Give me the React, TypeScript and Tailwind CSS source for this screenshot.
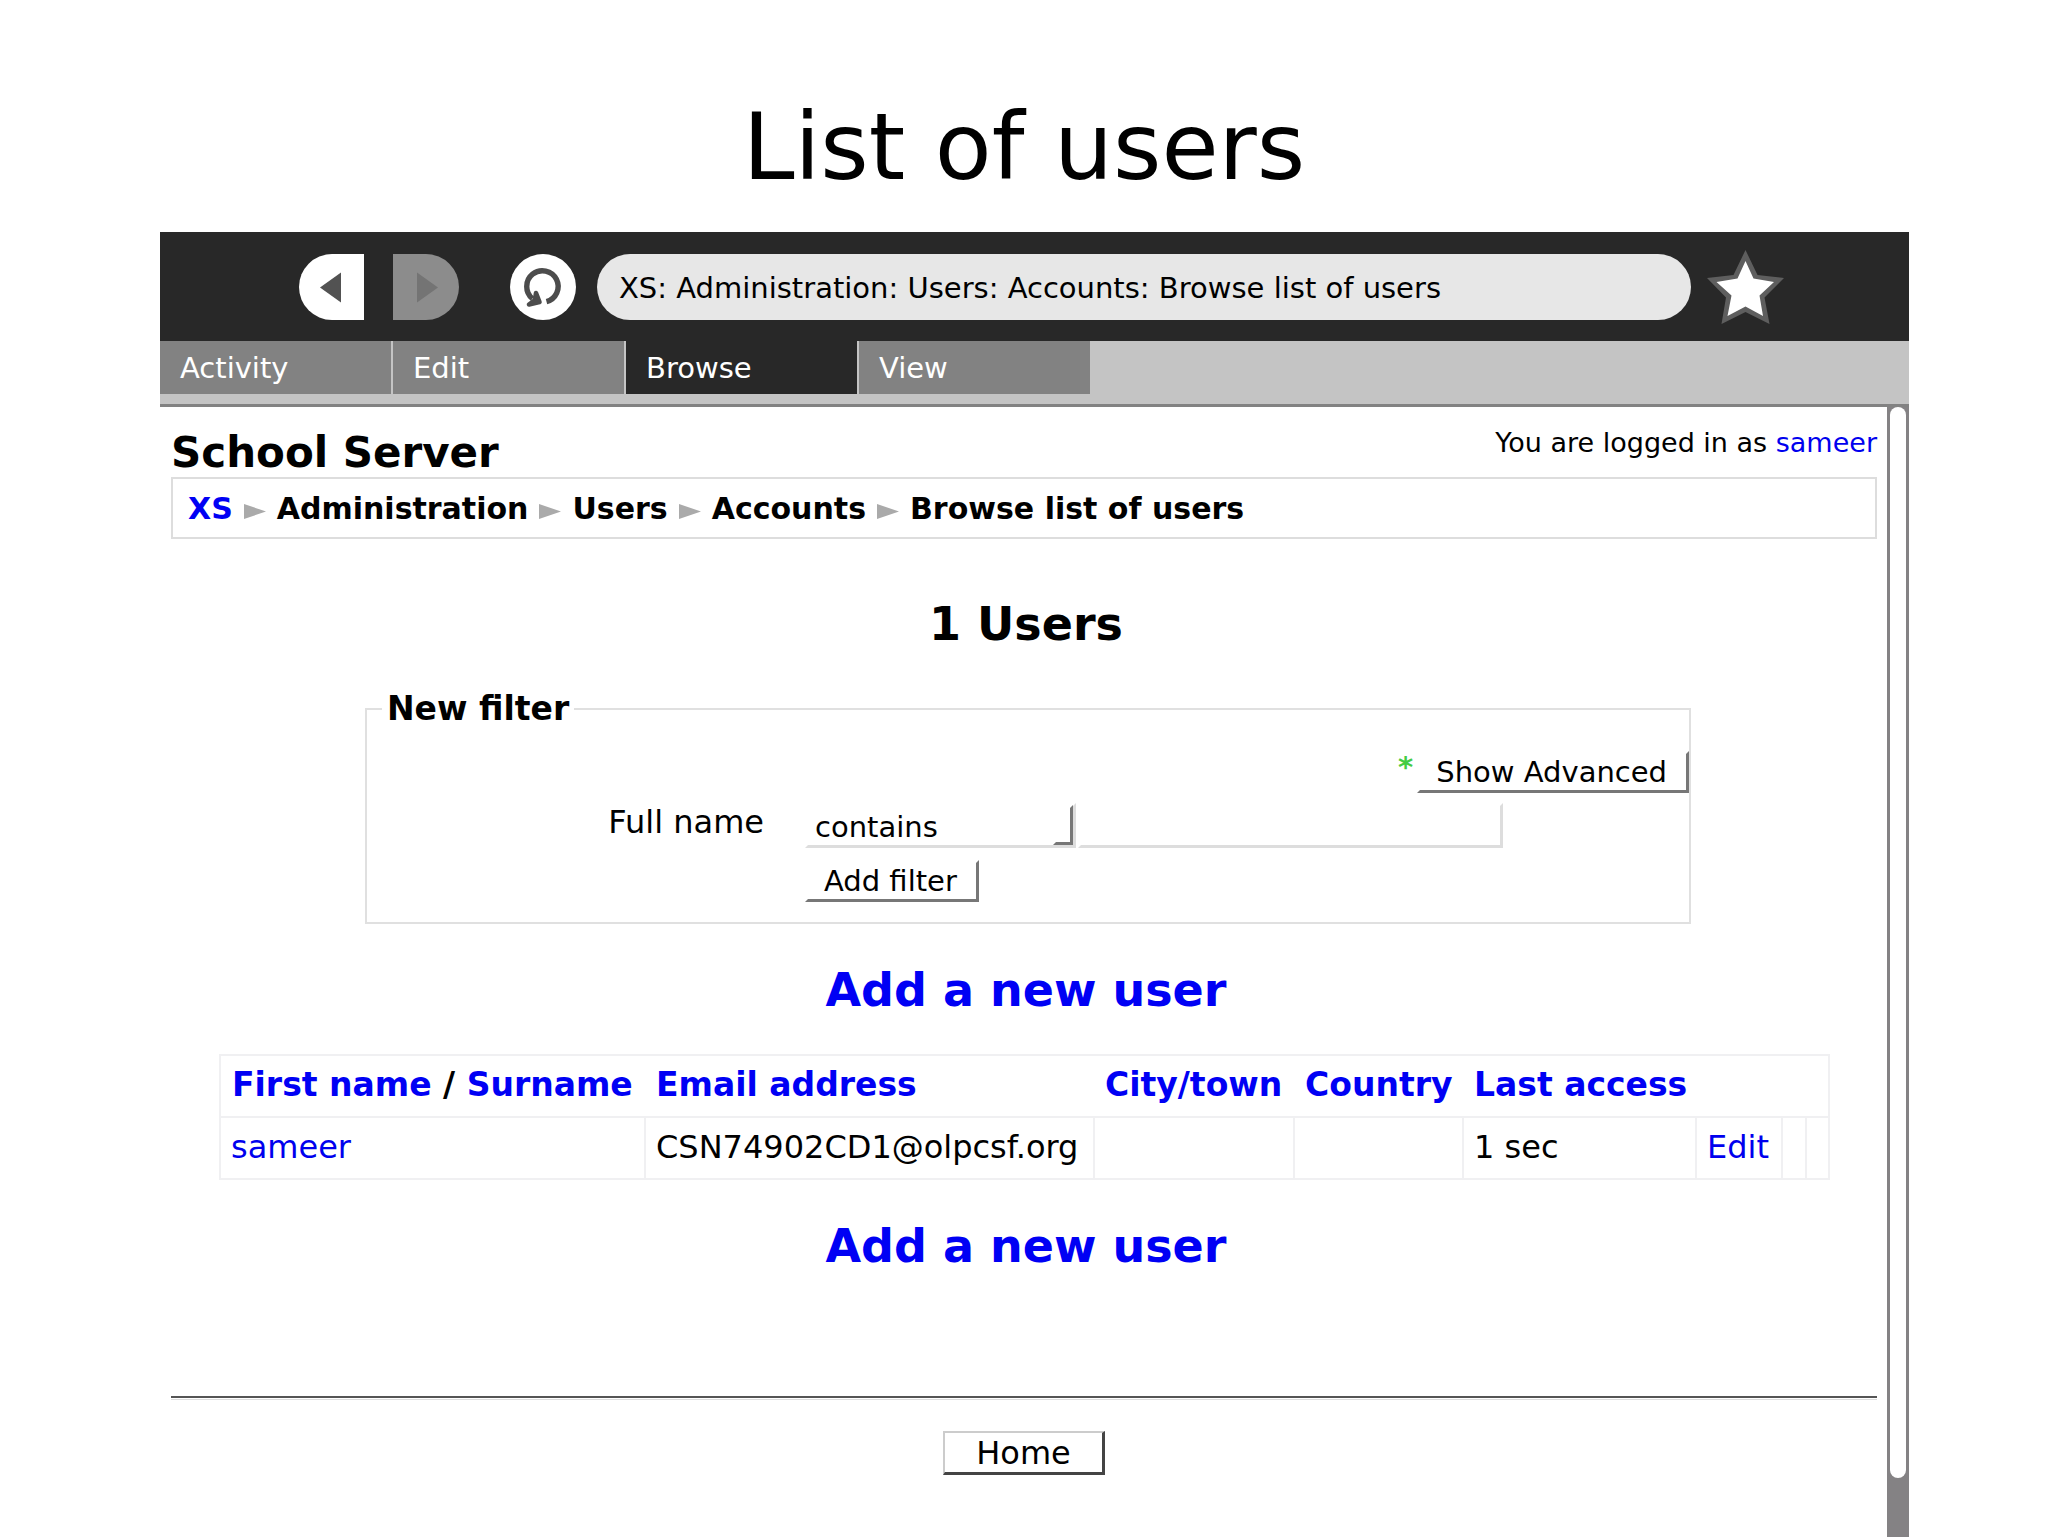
import { useState } from 'react';
import clsx from 'clsx';

const tabs = ['Activity', 'Edit', 'Browse', 'View'];

const crumbs = [
  { label: 'XS', href: '#home' },
  { label: 'Administration' },
  { label: 'Users' },
  { label: 'Accounts' },
  { label: 'Browse list of users' },
];

const users = [
  { name: 'sameer', email: 'CSN74902CD1@olpcsf.org', city: '', country: '', lastAccess: '1 sec' },
];

const BackIcon = () => (
  <svg viewBox="0 0 65 66" className="w-full h-full" aria-hidden="true">
    <path d="M42 18.5V48.5L21 33.5Z" fill="#525252" />
  </svg>
);

const ForwardIcon = () => (
  <svg viewBox="0 0 65 66" className="w-full h-full" aria-hidden="true">
    <path d="M23.5 18.5V48.5L44.5 33.5Z" fill="#747474" />
  </svg>
);

const ReloadIcon = () => (
  <svg viewBox="0 0 66 66" className="w-full h-full" aria-hidden="true">
    <path d="M36.5 47.6A15.7 15.7 0 1 0 22.5 44.6" fill="none" stroke="#4c4c4c" strokeWidth="5.4" />
    <path
      d="M26 39L29.5 48L19 50.5L25 46Z"
      fill="#4c4c4c"
      stroke="#4c4c4c"
      strokeWidth="4.6"
      strokeLinejoin="round"
    />
  </svg>
);

const StarIcon = () => (
  <svg viewBox="0 0 77 74" className="w-full h-full" aria-hidden="true">
    <path
      d="M38.5 0L50.5 25L77 28L57.5 47.5L62.5 74L38.5 62L14.5 74L19 47.5L0 28L26.5 25Z"
      fill="#5e5e5e"
    />
    <path
      d="M38.5 11L46.5 28.5L67 32L52.5 45.5L56 66L38.5 56.5L20.5 66L24.5 45.5L9.5 32L30.5 28.5Z"
      fill="#fff"
    />
  </svg>
);

const CrumbArrow = () => (
  <svg viewBox="0 0 22 15" className="w-[22px] h-[15px] mt-1" aria-hidden="true">
    <path d="M0 0L22 7.5L0 15Z" fill="#aaa" />
  </svg>
);

const BevelButton = ({ children }: { children: string }) => (
  <button
    type="button"
    className="h-[42px] pl-4 pr-[19px] text-[29px] leading-9 whitespace-nowrap border-[3px] border-white border-r-[#777] border-b-[#777]"
  >
    {children}
  </button>
);

const AddUserLink = () => (
  <h2 className="pl-1 text-center text-[46px] leading-[56px] font-bold">
    <a href="#add" className="text-[#0000f4]">Add a new user</a>
  </h2>
);

export default function App() {
  const [activeTab, setActiveTab] = useState('Browse');
  const [address, setAddress] = useState('XS: Administration: Users: Accounts: Browse list of users');
  const [fullName, setFullName] = useState('');

  return (
    <div className="min-h-screen flex flex-col bg-white text-black font-['DejaVu_Sans',sans-serif]">
      <h1 className="pt-[92px] pb-[30px] text-center text-[93px] leading-[110px]">List of users</h1>

      <div className="flex-1 flex flex-col ml-[160px] mr-[139px]">
        <div className="h-[109px] flex items-center bg-[#282828] pl-[139px] pr-[125px]">
          <button type="button" aria-label="Back" className="w-[65px] h-[66px] shrink-0 bg-white rounded-l-full">
            <BackIcon />
          </button>
          <button
            type="button"
            aria-label="Forward"
            disabled
            className="w-[66px] h-[66px] ml-[29px] shrink-0 bg-[#8c8c8c] rounded-r-full"
          >
            <ForwardIcon />
          </button>
          <button type="button" aria-label="Reload" className="w-[66px] h-[66px] ml-[51px] shrink-0 bg-white rounded-full">
            <ReloadIcon />
          </button>
          <input
            type="text"
            aria-label="Address"
            value={address}
            onChange={(e) => setAddress(e.target.value)}
            className="flex-1 min-w-0 h-[66px] ml-[21px] px-[22px] pt-[2px] rounded-full bg-[#e7e7e7] text-[29px]"
          />
          <button type="button" aria-label="Bookmark" className="w-[77px] h-[74px] ml-4 shrink-0">
            <StarIcon />
          </button>
        </div>

        <div className="flex gap-[2px] bg-[#c4c4c4] pb-[10px] border-b-[3px] border-[#828282]">
          {tabs.map((tab) => (
            <button
              key={tab}
              type="button"
              onClick={() => setActiveTab(tab)}
              className={clsx(
                'w-[231px] h-[53px] pl-5 pt-[2px] text-left text-[29px] text-white',
                tab === activeTab ? 'bg-[#282828]' : 'bg-[#828282]'
              )}
            >
              {tab}
            </button>
          ))}
        </div>

        <div className="flex-1 flex">
          <main className="flex-1 min-w-0 pt-[22px] pl-[11px] pr-[10px]">
            <header className="flex justify-between items-start">
              <p className="text-[42px] leading-[48px] font-bold">School Server</p>
              <p className="text-[27px] leading-7">
                You are logged in as <a href="#profile" className="text-[#0000ee]">sameer</a>
              </p>
            </header>

            <nav aria-label="Breadcrumb" className="h-[62px] flex items-center border-2 border-[#ddd] pt-[2px] pl-[15px]">
              <ol className="flex items-center gap-[11px] text-[30px] leading-9 font-bold">
                {crumbs.map((crumb, i) => (
                  <li key={crumb.label} className="flex items-center gap-[11px]">
                    {i > 0 && <CrumbArrow />}
                    {crumb.href ? (
                      <a href={crumb.href} className="text-[#0000f4]">{crumb.label}</a>
                    ) : (
                      <span>{crumb.label}</span>
                    )}
                  </li>
                ))}
              </ol>
            </nav>

            <h2 className="mt-[57px] pl-1 text-center text-[46px] leading-[56px] font-bold">1 Users</h2>

            <fieldset className="mt-[39px] ml-[194px] mr-[186px] border-2 border-[#e0e0e0] pb-5">
              <legend className="ml-[15px] px-[5px] text-[33px] leading-9 font-bold">New filter</legend>

              <div className="mt-6 flex justify-end">
                <span className="mr-1 text-[29px] leading-8 font-bold text-[#4c4]">*</span>
                <BevelButton>Show Advanced</BevelButton>
              </div>

              <div className="mt-[10px] grid grid-cols-[397px_1fr] gap-x-[41px] gap-y-3">
                <label htmlFor="fullname" className="text-right text-[32px] leading-[38px]">
                  Full name
                </label>
                <div className="flex gap-[2px]">
                  <div className="relative">
                    <select
                      aria-label="Full name match"
                      className="appearance-none w-[271px] h-[45px] pl-[7px] bg-white text-[29px] border-[3px] border-white border-r-[#ddd] border-b-[#ddd]"
                    >
                      <option>contains</option>
                      <option>doesn't contain</option>
                      <option>is equal to</option>
                      <option>starts with</option>
                      <option>ends with</option>
                      <option>is empty</option>
                    </select>
                    <span className="pointer-events-none absolute right-[3px] bottom-[3px] w-[20px] h-[40px] border-[3px] border-transparent border-r-[#777] border-b-[#777]" />
                  </div>
                  <input
                    id="fullname"
                    type="text"
                    value={fullName}
                    onChange={(e) => setFullName(e.target.value)}
                    className="w-[425px] h-[45px] px-2 text-[29px] border-[3px] border-white border-r-[#ddd] border-b-[#ddd]"
                  />
                </div>
                <div className="col-start-2">
                  <BevelButton>Add filter</BevelButton>
                </div>
              </div>
            </fieldset>

            <div className="mt-[38px]">
              <AddUserLink />
            </div>

            <div className="mt-9 mx-[48px]">
              <table className="w-full table-fixed border-collapse border-2 border-[#f0f0f2] text-left text-[32px] leading-[38px] whitespace-nowrap">
                <colgroup>
                  <col className="w-[425px]" />
                  <col className="w-[449px]" />
                  <col className="w-[200px]" />
                  <col className="w-[169px]" />
                  <col className="w-[233px]" />
                  <col className="w-[86px]" />
                  <col className="w-[24px]" />
                  <col className="w-[23px]" />
                </colgroup>
                <thead>
                  <tr className="h-[62px] text-[33px] text-[#0000f4]">
                    <th className="pl-[11px] pb-[2px]">
                      <a href="#firstname">First name</a> <span className="text-black">/</span>{' '}
                      <a href="#lastname">Surname</a>
                    </th>
                    <th className="pl-[11px] pb-[2px]"><a href="#email">Email address</a></th>
                    <th className="pl-[11px] pb-[2px]"><a href="#city">City/town</a></th>
                    <th className="pl-[11px] pb-[2px]"><a href="#country">Country</a></th>
                    <th className="pl-[11px] pb-[2px]"><a href="#lastaccess">Last access</a></th>
                    <th colSpan={3} />
                  </tr>
                </thead>
                <tbody>
                  {users.map((user) => (
                    <tr key={user.name} className="h-[62px]">
                      <td className="pl-[10px] pb-[2px] border-2 border-[#f0f0f2]">
                        <a href="#user" className="text-[#0000ee]">{user.name}</a>
                      </td>
                      <td className="pl-[10px] pb-[2px] border-2 border-[#f0f0f2]">{user.email}</td>
                      <td className="pl-[10px] pb-[2px] border-2 border-[#f0f0f2]">{user.city}</td>
                      <td className="pl-[10px] pb-[2px] border-2 border-[#f0f0f2]">{user.country}</td>
                      <td className="pl-[10px] pb-[2px] border-2 border-[#f0f0f2]">{user.lastAccess}</td>
                      <td className="pl-[10px] pb-[2px] border-2 border-[#f0f0f2]">
                        <a href="#edit" className="text-[#0000ee]">Edit</a>
                      </td>
                      <td className="border-2 border-[#f0f0f2]" />
                      <td className="border-2 border-[#f0f0f2]" />
                    </tr>
                  ))}
                </tbody>
              </table>
            </div>

            <div className="mt-[38px]">
              <AddUserLink />
            </div>

            <hr className="mt-[122px] h-1 border-t-2 border-b border-t-[#555] border-b-[#ddd]" />

            <div className="mt-[31px] flex justify-center">
              <button
                type="button"
                className="h-11 px-[31px] text-[32px] leading-[38px] border-2 border-[#ccc] border-r-[3px] border-b-[3px] border-r-[#444] border-b-[#444]"
              >
                Home
              </button>
            </div>
          </main>

          {/* scroll bar */}
          <div className="w-[22px] flex flex-col bg-[#848284] px-[3px] pb-[59px]">
            <div className="flex-1 rounded-full bg-white" />
          </div>
        </div>
      </div>
    </div>
  );
}
